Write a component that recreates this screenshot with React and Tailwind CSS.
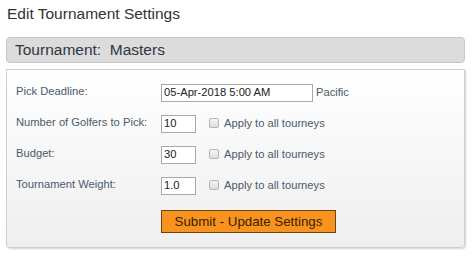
import React from 'react';

const rows = [
  { label: 'Pick Deadline:', value: '05-Apr-2018 5:00 AM', wide: true },
  { label: 'Number of Golfers to Pick:', value: '10' },
  { label: 'Budget:', value: '30' },
  { label: 'Tournament Weight:', value: '1.0' },
];

const Checkbox = () => (
  <span className="inline-block w-[10px] h-[10px] rounded-[2px] border border-[#b4b4b4] bg-gradient-to-b from-[#f4f4f4] to-[#dedede]" />
);

const App = () => {
  return (
    <div className="w-[474px] h-[259px] bg-white font-['Liberation_Sans',Arial,sans-serif] px-[6px] pt-[5px]">
      {/* Title */}
      <div className="w-[459px] text-[15.5px] leading-[18px] text-[#333] pl-[1px]">
        Edit Tournament Settings
      </div>

      {/* Tournament header */}
      <div className="w-[459px] mt-[14px] h-[26px] flex items-center pl-[8px] rounded-[4px] border border-[#c6c6c6] bg-[#dcdcdc] text-[15.5px] text-[#2f3640]">
        Tournament:&nbsp;&nbsp;Masters
      </div>

      {/* Settings box */}
      <div className="w-[459px] mt-[6px] border border-[#cfcfcf] rounded-b-[4px] bg-gradient-to-b from-white to-[#efefef] shadow-[1px_1px_2px_rgba(0,0,0,0.18)] pl-[9px] pt-[7px] pb-[14px] text-[11.2px]">
        {rows.map((row) => (
          <div key={row.label} className="flex items-center h-[31px]">
            <div className="w-[145px] text-[#4b5a6a] -mt-[2px]">{row.label}</div>
            <div
              className={`h-[18px] flex items-center border border-[#a9a9a9] bg-white pl-[2px] text-[#222] ${
                row.wide ? 'w-[152px]' : 'w-[35px]'
              }`}
            >
              {row.value}
            </div>
            {row.wide ? (
              <span className="ml-[3px] text-[#4b5a6a]">Pacific</span>
            ) : (
              <div className="flex items-center ml-[13px]">
                <Checkbox />
                <span className="ml-[5px] text-[#4b5a6a]">Apply to all tourneys</span>
              </div>
            )}
          </div>
        ))}

        <div className="pl-[145px] mt-[9px]">
          <button className="w-[175px] h-[23px] flex items-center justify-center bg-[#f7931e] border border-[#6a4514] text-[13.3px] text-[#3a2100]">
            Submit - Update Settings
          </button>
        </div>
      </div>
    </div>
  );
};

export default App;
